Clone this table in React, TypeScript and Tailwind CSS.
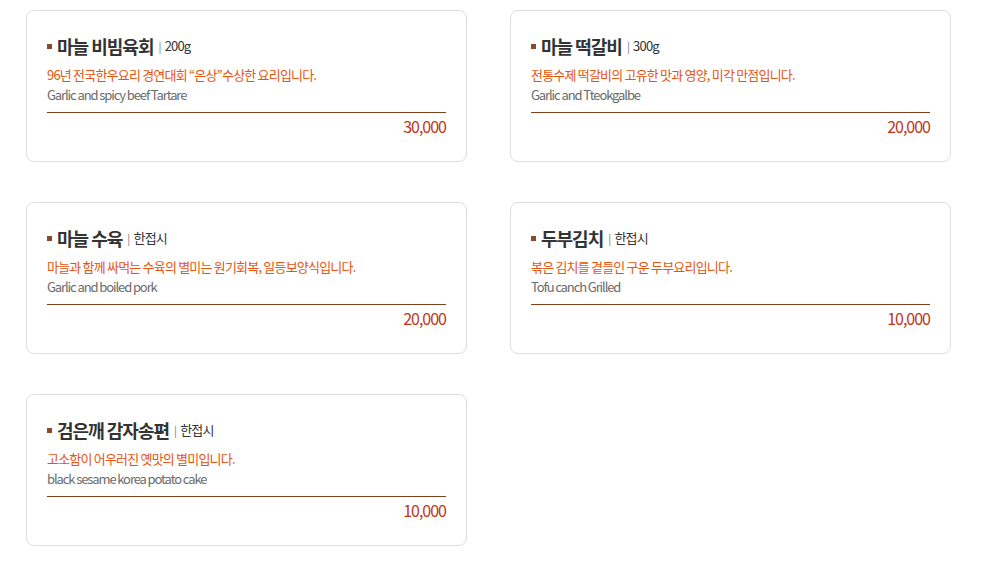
import React from 'react';

type Dish = {
  name: string;
  unit: string;
  desc: string;
  en: string;
  price: string;
};

const DISHES: Dish[] = [
  { name: '마늘 비빔육회', unit: '200g', desc: '96년 전국한우요리 경연대회 “은상”수상한 요리입니다.', en: 'Garlic and spicy beef Tartare', price: '30,000' },
  { name: '마늘 떡갈비', unit: '300g', desc: '전통수제 떡갈비의 고유한 맛과 영양, 미각 만점입니다.', en: 'Garlic and Tteokgalbe', price: '20,000' },
  { name: '마늘 수육', unit: '한접시', desc: '마늘과 함께 싸먹는 수육의 별미는 원기회복, 일등보양식입니다.', en: 'Garlic and boiled pork', price: '20,000' },
  { name: '두부김치', unit: '한접시', desc: '볶은 김치를 곁들인 구운 두부요리입니다.', en: 'Tofu canch Grilled', price: '10,000' },
  { name: '검은깨 감자송편', unit: '한접시', desc: '고소함이 어우러진 옛맛의 별미입니다.', en: 'black sesame korea potato cake', price: '10,000' },
];

const FONT = "font-['Noto_Sans_CJK_KR','Noto_Sans',sans-serif]";

const MenuCard: React.FC<{ dish: Dish }> = ({ dish }) => (
  <div className="border border-[#dddddd] rounded-lg bg-white px-5 pt-[23px] pb-[25px]">
    {/* Title */}
    <div className="flex items-center h-6">
      <span className="w-[5px] h-[5px] bg-[#8b4a2b] mr-[5px]" />
      <span className="text-[18px] font-bold text-[#333] tracking-[-1px] leading-6">{dish.name}</span>
      <span className="text-[13px] text-[#333] tracking-[-0.8px] ml-[5px] leading-6">
        <span className="text-[#777] text-[11px] mr-[4px]">|</span>
        {dish.unit}
      </span>
    </div>
    <p className="mt-[7px] text-[13px] leading-5 text-[#e8540e] tracking-[-0.8px]">{dish.desc}</p>
    <p className="text-[13px] leading-5 text-[#6b6b6b] tracking-[-1.1px]">{dish.en}</p>
    <div className="mt-[7px] h-px bg-[#7f3f1a]" />
    <p className="mt-[3px] text-right text-[16px] leading-5 text-[#c0361a] tracking-[-1px]">{dish.price}</p>
  </div>
);

const App: React.FC = () => {
  return (
    <div className={`min-h-screen bg-white pl-[26px] pt-[10px] ${FONT}`}>
      <div className="grid grid-cols-[441px_441px] gap-x-[43px] gap-y-[40px]">
        {DISHES.map(d => (
          <MenuCard key={d.name} dish={d} />
        ))}
      </div>
    </div>
  );
};

export default App;
